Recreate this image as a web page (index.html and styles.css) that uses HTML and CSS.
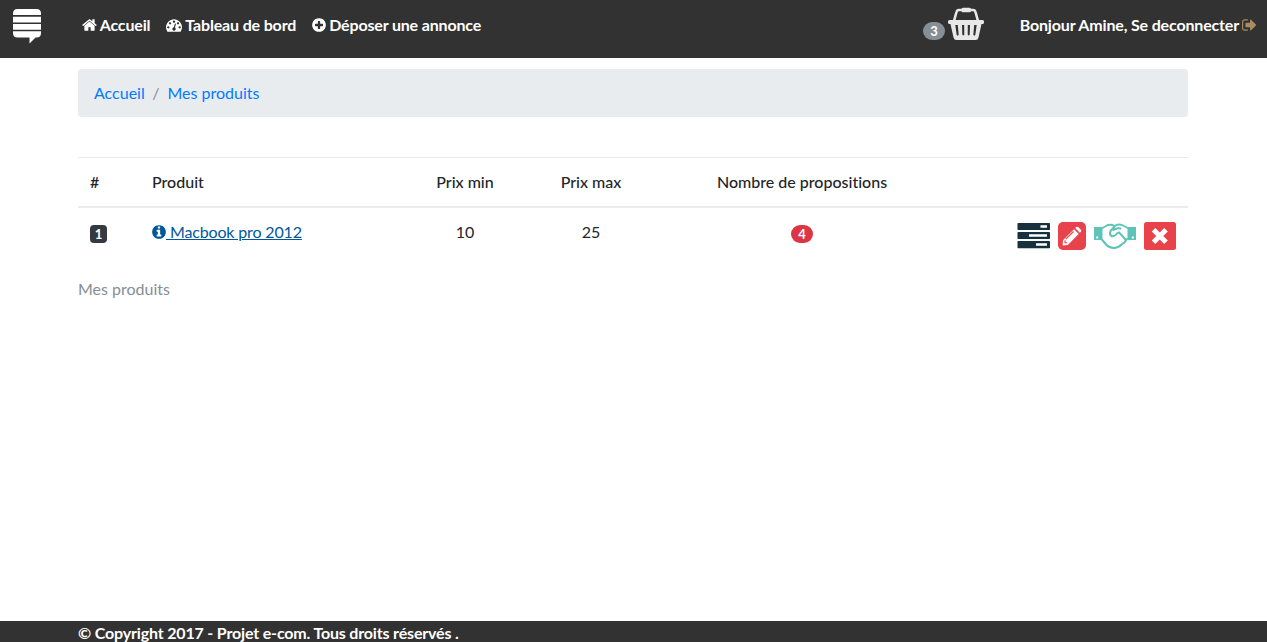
FILE: index.html
```html
<!DOCTYPE html>
<html lang="fr">
<head>
<meta charset="utf-8">
<title>Mes produits</title>
<link rel="stylesheet" href="styles.css">
</head>
<body>
<header class="navbar">
  <a class="brand" href="#"><svg width="28" height="35" viewBox="0 0 28 35" fill="#fff"><path d="M0 6V4.500Q0 0 4.500 0H23.500Q28 0 28 4.500V6ZM0 7.800H28V13.500H0ZM0 15H28V20.700H0ZM0 22.300H28V24Q28 28.500 23.500 28.500H22.500L16.500 34.500V28.500H4.500Q0 28.500 0 24Z"/></svg></a>
  <nav class="nav">
    <a href="#"><svg class="fa home" viewBox="64 0 1664 1792"><path d="M1472 992v480q0 26-19 45t-45 19h-384v-384h-256v384h-384q-26 0-45-19t-19-45v-480q0-1 .5-3t.5-3l575-474 575 474q1 2 1 6zm223-69l-62 74q-8 9-21 11h-3q-13 0-21-7l-692-577-692 577q-12 8-24 7-13-2-21-11l-62-74q-8-10-7-23.500t11-21.500l719-599q32-26 76-26t76 26l244 204v-195q0-14 9-23t23-9h192q14 0 23 9t9 23v408l219 182q10 8 11 21.500t-7 23.500z"/></svg><span class="label">Accueil</span></a>
    <a href="#"><svg class="fa dash" viewBox="0 0 1792 1792"><path d="M384 1152q0-53-37.500-90.500t-90.500-37.500-90.500 37.500-37.500 90.500 37.500 90.500 90.500 37.500 90.500-37.500 37.500-90.500zm192-448q0-53-37.500-90.500t-90.500-37.500-90.500 37.500-37.500 90.500 37.500 90.500 90.500 37.500 90.500-37.500 37.500-90.500zm428 481l101-382q6-26-7.500-48.500t-38.500-29.500-48 6.500-30 39.500l-101 382q-60 5-107 43.500t-63 98.500q-20 77 20 146t117 89 146-20 89-117q16-60-6-117t-72-91zm660-33q0-53-37.500-90.500t-90.500-37.500-90.500 37.500-37.500 90.500 37.500 90.500 90.500 37.500 90.500-37.500 37.500-90.500zm-640-640q0-53-37.500-90.500t-90.500-37.500-90.500 37.500-37.500 90.500 37.500 90.500 90.500 37.500 90.500-37.500 37.500-90.500zm448 192q0-53-37.500-90.500t-90.500-37.500-90.500 37.500-37.500 90.500 37.500 90.500 90.500 37.500 90.500-37.500 37.500-90.500zm320 448q0 261-141 483-19 29-54 29h-1402q-35 0-54-29-141-221-141-483 0-182 71-348t191-286 286-191 348-71 348 71 286 191 191 286 71 348z"/></svg><span class="label">Tableau de bord</span></a>
    <a href="#"><svg class="fa circle" viewBox="128 0 1536 1792"><path d="M1344 960v-128q0-26-19-45t-45-19h-256v-256q0-26-19-45t-45-19h-128q-26 0-45 19t-19 45v256h-256q-26 0-45 19t-19 45v128q0 26 19 45t45 19h256v256q0 26 19 45t45 19h128q26 0 45-19t19-45v-256h256q26 0 45-19t19-45zm320-64q0 209-103 385.500t-279.500 279.500-385.500 103-385.500-103-279.500-279.500-103-385.500 103-385.500 279.500-279.500 385.500-103 385.500 103 279.500 279.500 103 385.500z"/></svg><span class="label">Déposer une annonce</span></a>
  </nav>
  <a class="cart" href="#"><span class="badge pill gray">3</span><svg width="36" height="34" viewBox="0 0 36 34"><path d="M6 14 8.500 5Q9 3 11 3H25Q27 3 27.500 5L30 14" fill="none" stroke="#e8e8e8" stroke-width="2.600"/><rect x="13.500" y=".8" width="9.500" height="4.400" rx="1.500" fill="#e8e8e8"/><path fill="#e8e8e8" fill-rule="evenodd" d="M1.500 13H34.500Q36 13 36 14.500V15.500Q36 17 34.500 17H33.500L30.500 30.500Q30 33 27.500 33H8.500Q6 33 5.500 30.500L2.500 17H1.500Q0 17 0 15.500V14.500Q0 13 1.500 13ZM7.300 18 8.600 27.500Q9 29 10 28.500 10.800 28 10.600 27L9.800 18ZM14 18 14.300 27.500Q15.300 29.500 16.300 27.500L16.200 18ZM19.800 18 19.700 27.500Q20.700 29.500 21.700 27.500L22 18ZM26.200 18 25.400 27Q25.200 28 26 28.500 27 29 27.400 27.500L28.700 18Z"/></svg></a>
  <a class="logout" href="#"><span class="label">Bonjour Amine, Se deconnecter</span><svg class="fa out" viewBox="0 0 1664 1792"><path d="M640 1440q0 4 1 20t.5 26.500-3 23.500-10 19.500-20.500 6.500h-320q-119 0-203.500-84.500t-84.500-203.500v-704q0-119 84.500-203.500t203.500-84.500h320q13 0 22.500 9.500t9.500 22.500q0 4 1 20t.5 26.500-3 23.500-10 19.500-20.500 6.500h-320q-66 0-113 47t-47 113v704q0 66 47 113t113 47h312l11.500 1 11.500 3 8 5.500 7 9 2 13.500zm928-544q0 26-19 45l-544 544q-19 19-45 19t-45-19-19-45v-288h-448q-26 0-45-19t-19-45v-384q0-26 19-45t45-19h448v-288q0-26 19-45t45-19 45 19l544 544q19 19 19 45z"/></svg></a>
</header>
<main class="container">
  <div class="breadcrumb"><a href="#">Accueil</a><span class="sep">/</span><a href="#">Mes produits</a></div>
  <table class="table">
    <colgroup><col class="c-num"><col class="c-prod"><col class="c-min"><col class="c-max"><col class="c-prop"><col></colgroup>
    <thead><tr><th class="left">#</th><th class="left">Produit</th><th>Prix min</th><th>Prix max</th><th>Nombre de propositions</th><th></th></tr></thead>
    <tbody><tr>
      <td class="left"><span class="badge dark">1</span></td>
      <td class="left"><a class="product" href="#"><svg class="fa circle" viewBox="128 0 1536 1792"><path d="M1152 1376v-160q0-14-9-23t-23-9h-96v-512q0-14-9-23t-23-9h-320q-14 0-23 9t-9 23v160q0 14 9 23t23 9h96v320h-96q-14 0-23 9t-9 23v160q0 14 9 23t23 9h448q14 0 23-9t9-23zm-128-896v-160q0-14-9-23t-23-9h-192q-14 0-23 9t-9 23v160q0 14 9 23t23 9h192q14 0 23-9t9-23zm640 416q0 209-103 385.500t-279.500 279.500-385.500 103-385.500-103-279.500-279.500-103-385.500 103-385.500 279.500-279.500 385.500-103 385.500 103 279.500 279.500 103 385.500z"/></svg> Macbook pro 2012</a></td>
      <td>10</td><td>25</td><td><span class="badge pill red">4</span></td>
      <td><div class="actions">
        <svg width="33" height="26" viewBox="0 0 33 26"><g fill="#17323f"><rect x=".5" width="32.500" height="7" rx=".8"/><rect x=".5" y="9" width="32.500" height="7" rx=".8"/><rect x=".5" y="18" width="32.500" height="7.200" rx=".8"/></g><path fill="#fff" d="M23.500 2.300h6.500v2.400h-6.500zM12 11.300H30v2.400H12zM19 20.300H30v2.400H19z"/></svg>
        <svg width="28" height="28" viewBox="0 0 28 28"><rect width="28" height="28" rx="5" fill="#e8434a"/><path fill="#fff" d="M16 7.200 20.700 12 9.800 22.900 4.600 23.400 5 18.200ZM17.200 6 18.300 5Q19.200 4.300 20.100 5L22.900 7.800Q23.700 8.800 22.900 9.700L21.800 10.800Z"/><path d="M7.800 17.200 15.500 9.500M7 18.300V20.700H9.300" fill="none" stroke="#e8434a" stroke-width="1.100"/></svg>
        <svg width="42" height="28" viewBox="0 0 42 28"><path fill="#5fc3b7" d="M0 5H8V18H0ZM34 5H42V18H34Z"/><path d="M7.500 6.500 12 4Q16 1.500 20.500 4Q25 1 30 4L34.500 6.500V16L32.500 17.500Q31 21 27.500 22.500Q24 26 20 26Q15.500 26 12.500 23L7.500 17Z" fill="#fff" stroke="#5fc3b7" stroke-width="2" stroke-linejoin="round"/><path d="M21 4 16.500 9Q15 13 18 14.200Q20.500 15 23 11.500L25 10.300 31.500 17.500M26.500 6.500Q22.500 5.500 19.800 8" fill="none" stroke="#5fc3b7" stroke-width="2" stroke-linecap="round" stroke-linejoin="round"/><path fill="#fff" d="M2.200 14.500h2v2h-2zM37.800 14.500h2v2h-2z"/></svg>
        <svg width="32" height="28" viewBox="0 0 32 28"><rect width="32" height="28" rx="2.500" fill="#e8434a"/><path d="M9.500 7.700 22 20.200M22 7.700 9.500 20.200" stroke="#fff" stroke-width="5"/></svg>
      </div></td>
    </tr></tbody>
  </table>
  <p class="caption">Mes produits</p>
</main>
<footer class="footer">© Copyright 2017 - Projet e-com. Tous droits réservés .</footer>
</body>
</html>
```
FILE: styles.css
```css
* { box-sizing: border-box; }
body {
  margin: 0;
  height: 642px;
  overflow: hidden;
  display: flex;
  flex-direction: column;
  background: #fff;
  color: #212529;
  font: 400 16px/24px Lato, "Liberation Sans", sans-serif;
  font-variant-ligatures: none;
}
a { color: #007bff; text-decoration: none; }
svg { display: block; flex: none; }
.navbar {
  display: flex;
  align-items: center;
  height: 58px;
  padding: 0 10px 7px 13px;
  background: #323232;
  flex: none;
  font-weight: 700;
}
.navbar a { display: flex; align-items: center; color: #fff; white-space: nowrap; }
.navbar .brand { padding-top: 2px; }
.nav { display: flex; gap: 16px; margin-left: 40.700px; }
.nav, .logout { padding-bottom: 2px; }
.fa { height: 16px; fill: currentColor; }
.home { width: 15px; margin-right: 3px; }
.dash { width: 16px; margin-right: 3px; }
.circle { width: 14px; margin-right: 3px; }
.out { width: 15px; margin-left: 3px; color: #a98d61; }
.label { letter-spacing: -.16px; }
.navbar .cart { margin-left: auto; margin-right: 35.500px; gap: 3.500px; }
.cart svg { margin-top: -4px; }
.badge {
  display: inline-block;
  padding: 3.200px 5px;
  border-radius: 4px;
  color: #fff;
  font-size: 13px;
  font-weight: 700;
  line-height: 12px;
  text-align: center;
}
.pill { padding: 3.200px 7px; border-radius: 10px; }
.gray { background: #868e96; margin-top: 11px; }
.dark { padding: 3.200px 4.700px; background: #343a40; }
.red { background: #dc3545; }
td .badge { margin-top: 1px; vertical-align: -1px; }
.container { width: 1110px; margin: 11px 0 0 78px; flex: 1; }
.breadcrumb { display: flex; height: 48px; padding: 12px 16px; border-radius: 4px; background: #e9ecef; }
.sep { padding: 0 8px 0 7.500px; color: #868e96; }
.table { width: 100%; margin-top: 40px; table-layout: fixed; border-collapse: separate; border-spacing: 0; }
.c-num { width: 62px; }
.c-prod { width: 264px; }
.c-min { width: 122px; }
.c-max { width: 130px; }
.c-prop { width: 292px; }
th, td { padding: 12px; text-align: center; vertical-align: top; white-space: nowrap; }
th { height: 51px; border-top: 1px solid #e9ecef; border-bottom: 2px solid #e9ecef; font-weight: 500; }
.left { text-align: left; }
.product { color: #01579b; text-decoration: underline; letter-spacing: -.15px; }
.product .fa { display: inline-block; margin: 0; vertical-align: -2px; }
.actions { display: flex; justify-content: flex-end; align-items: center; gap: 8px; padding-top: 2px; }
.caption { margin: 15px 0 0; color: #868e96; }
.footer { height: 21px; flex: none; padding-left: 78px; background: #323232; color: #fff; font-weight: 700; letter-spacing: -.17px; }
```
